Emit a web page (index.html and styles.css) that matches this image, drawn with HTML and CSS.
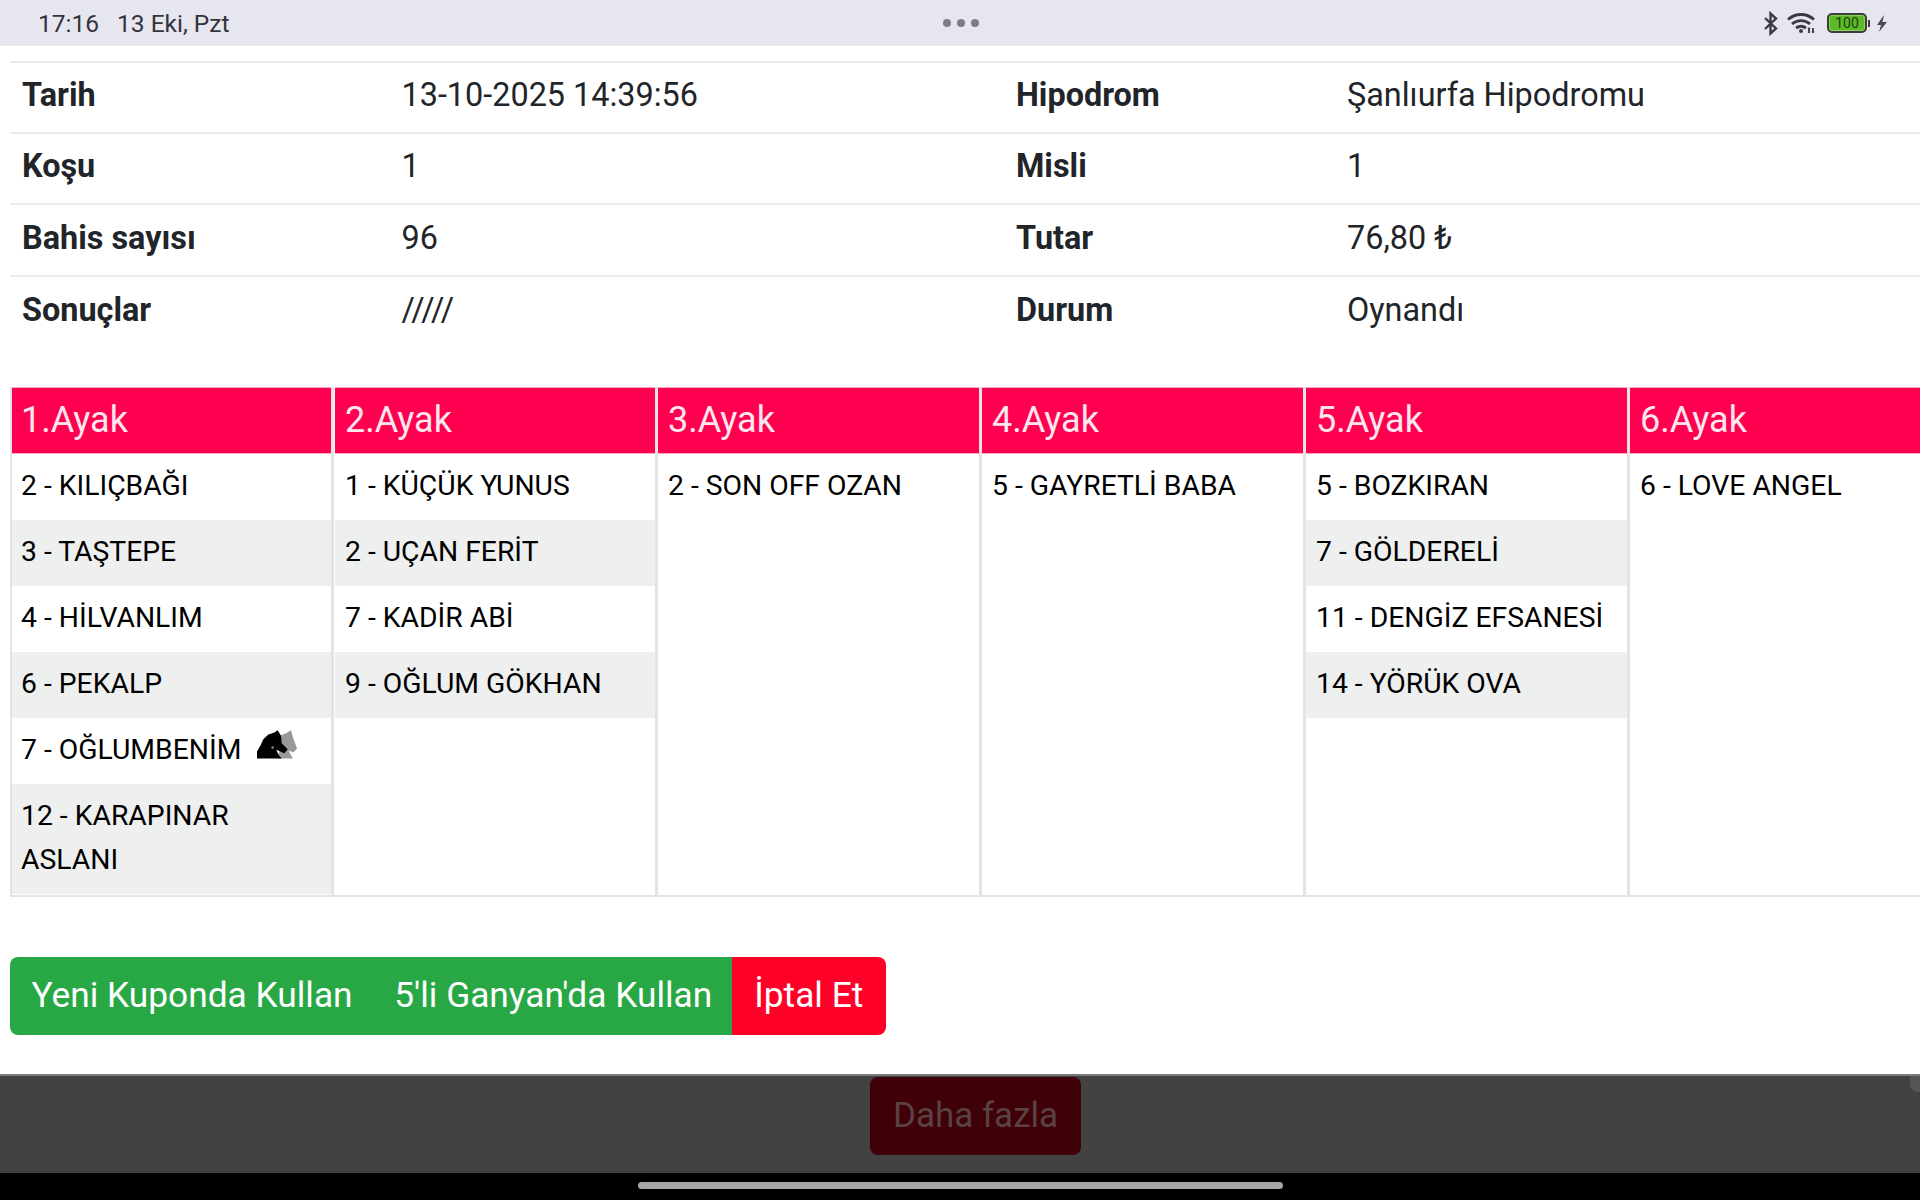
FILE: index.html
```html
<!DOCTYPE html>
<html lang="tr">
<head>
<meta charset="utf-8">
<title>Kupon</title>
<link rel="stylesheet" href="styles.css">
</head>
<body>
<header class="status">
  <div class="status-left"><span>17:16</span><span>13 Eki, Pzt</span></div>
  <div class="dots"><i></i><i></i><i></i></div>
  <div class="status-right">
    <svg class="ic-bt" width="16" height="25" viewBox="0 0 16 24"><path d="M2 6.500 13 17l-5.500 5V2L13 7 2 17.500" fill="none" stroke="#3a3a44" stroke-width="2.400"/></svg>
    <svg class="ic-wifi" width="30" height="22" viewBox="0 0 30 22"><g fill="none" stroke="#3a3a44" stroke-width="2.800"><path d="M1 7.500C8.500 .8 19.500 .8 27 7.500"/><path d="M5 12c5.500-4.500 12.500-4.500 18 0"/><path d="M9 16c3.200-2.300 6.800-2.300 10 0"/></g><circle cx="14" cy="19" r="2" fill="#3a3a44"/><path d="M22 21v-5M26 21v-5" stroke="#3a3a44" stroke-width="1.800"/><path d="m20.500 17 1.500-2 1.500 2M24.500 19l1.500 2 1.500-2" fill="#3a3a44"/></svg>
    <div class="battery"><span class="battery-body"><span class="battery-num">100</span></span><span class="battery-cap"></span></div>
    <svg class="ic-bolt" width="10" height="17" viewBox="0 0 10 17"><path d="M7 0 0 10h4l-2 7 8-10H5.500z" fill="#4a4a52"/></svg>
  </div>
</header>

<main class="page">
  <section class="info">
    <div class="info-row"><b>Tarih</b><span>13-10-2025 14:39:56</span><b>Hipodrom</b><span>Şanlıurfa Hipodromu</span></div>
    <div class="info-row"><b>Koşu</b><span>1</span><b>Misli</b><span>1</span></div>
    <div class="info-row"><b>Bahis sayısı</b><span>96</span><b>Tutar</b><span>76,80 ₺</span></div>
    <div class="info-row"><b>Sonuçlar</b><span>/////</span><b>Durum</b><span>Oynandı</span></div>
  </section>

  <section class="legs">
    <div class="leg">
      <h3>1.Ayak</h3>
      <p>2 - KILIÇBAĞI</p><p>3 - TAŞTEPE</p><p>4 - HİLVANLIM</p><p>6 - PEKALP</p>
      <p>7 - OĞLUMBENİM
        <svg class="horse" width="42" height="31" viewBox="75 30 126 92"><path d="M135 118 148 92 146 50 165 42 180 33 186 55 198 88 187 100 172 94 186 118z" fill="#999"/><path d="M78 118V97L88 80 97 60 112 46 130 40 140 33 150 50 152 72 170 90 160 102 146 96 136 92 142 106 152 118z" fill="#000"/><circle cx="125" cy="85" r="4" fill="#888"/></svg>
      </p>
      <p>12 - KARAPINAR ASLANI</p>
    </div>
    <div class="leg"><h3>2.Ayak</h3><p>1 - KÜÇÜK YUNUS</p><p>2 - UÇAN FERİT</p><p>7 - KADİR ABİ</p><p>9 - OĞLUM GÖKHAN</p></div>
    <div class="leg"><h3>3.Ayak</h3><p>2 - SON OFF OZAN</p></div>
    <div class="leg"><h3>4.Ayak</h3><p>5 - GAYRETLİ BABA</p></div>
    <div class="leg"><h3>5.Ayak</h3><p>5 - BOZKIRAN</p><p>7 - GÖLDERELİ</p><p>11 - DENGİZ EFSANESİ</p><p>14 - YÖRÜK OVA</p></div>
    <div class="leg"><h3>6.Ayak</h3><p>6 - LOVE ANGEL</p></div>
  </section>

  <div class="actions">
    <button class="btn green">Yeni Kuponda Kullan</button><button class="btn green">5'li Ganyan'da Kullan</button><button class="btn red">İptal Et</button>
  </div>
</main>

<div class="dim"><button class="more">Daha fazla</button><span class="edge"></span></div>
<footer class="nav"><span class="pill"></span></footer>
</body>
</html>
```

FILE: styles.css
```css
* { box-sizing: border-box; }
html, body { margin: 0; padding: 0; }
body {
  width: 1920px;
  height: 1200px;
  overflow: hidden;
  display: flex;
  flex-direction: column;
  background: #fff;
  font-family: Roboto, "Liberation Sans", sans-serif;
}

.status {
  height: 46px;
  flex: none;
  background: #e6e6ee;
  color: #33333b;
  font-size: 24.500px;
  display: grid;
  grid-template-columns: 1fr auto 1fr;
  align-items: center;
  padding: 0 33px 0 38px;
}
.status-left { display: flex; gap: 18px; }
.dots { display: flex; gap: 6px; margin-left: -4px; }
.dots i { width: 8px; height: 8px; border-radius: 50%; background: #7c7c84; }
.status-right { display: flex; justify-content: flex-end; align-items: center; }
.ic-bt { margin-right: 8px; }
.ic-wifi { margin-right: 10px; }
.battery { display: flex; align-items: center; margin-right: 7px; }
.battery-body {
  width: 40px;
  height: 20px;
  padding: 1px;
  display: flex;
  border: 2px solid #3d3d3d;
  border-radius: 5px;
  background: #8ad24f;
  color: #1f3a12;
  font-size: 14px;
  line-height: 14px;
  text-align: center;
}
.battery-num { flex: 1; background: #5cba26; border-radius: 2px; }
.battery-cap { width: 2px; height: 7px; margin-left: 1px; background: #3d3d3d; }

.page { flex: 1; min-height: 0; padding: 15px 0 0 10px; }

.info { border-top: 2px solid #e9ecef; }
.info-row {
  height: 71.500px;
  display: grid;
  grid-template-columns: 379.500px 614.500px 331px 1fr;
  align-items: center;
  padding: 0 0 4px 12px;
  color: #212529;
  font-size: 32.400px;
  border-bottom: 2px solid #e9ecef;
}
.info-row:first-child { height: 70.500px; }
.info-row:last-child { border-bottom: 0; padding-bottom: 5px; }
.info-row b { font-weight: 700; }

.legs {
  display: flex;
  width: 1950px;
  margin-top: 39px;
  height: 509.500px;
  border-bottom: 2px solid #e4e4e4;
}
.leg {
  width: 324px;
  flex: none;
  border-right: 3px solid #e4e4e4;
}
.leg:nth-child(2) { padding-left: 1px; }
.leg h3 {
  margin: 0;
  height: 67px;
  padding: 0 10px;
  background: #ff0050;
  border-top: 1px solid #f7a8c4;
  border-bottom: 1px solid #f7a8c4;
  color: #fde6ee;
  font-size: 36px;
  font-weight: 400;
  line-height: 64px;
}
.leg:first-child h3 { padding-left: 9px; }
.leg p {
  margin: 0;
  padding: 10px 10px 12px;
  min-height: 66px;
  font-size: 28.300px;
  line-height: 44px;
  color: #000;
}
.leg p:nth-of-type(even) { background: #eeefef; }
.leg:first-child { border-left: 2px solid #e4e4e4; }
.leg:first-child p { padding-left: 9px; }
.horse { margin-left: 8px; vertical-align: -1px; filter: blur(0.5px); }

.actions { display: flex; margin-top: 60.500px; }
.btn {
  height: 78px;
  border: 0;
  padding: 0 0 2px;
  color: #fff;
  font-family: inherit;
  font-size: 35.300px;
}
.green { background: #28a745; }
.green:first-child { width: 363px; border-radius: 8px 0 0 8px; padding-left: 1px; }
.green:nth-child(2) { width: 358.500px; padding-left: 2px; }
.red { width: 154.500px; background: #ff0028; border-radius: 0 8px 8px 0; }

.dim {
  position: relative;
  height: 99px;
  flex: none;
  background: #424242;
  border-top: 2px solid #7a7a7a;
  display: flex;
  justify-content: center;
  padding: 1px 0 0 31px;
}
.more {
  width: 211px;
  height: 78px;
  border: 0;
  padding: 0 0 2px;
  border-radius: 8px;
  background: #3f0008;
  color: #5a4144;
  font-family: inherit;
  font-size: 35px;
}
.edge {
  position: absolute;
  right: 0;
  top: 0;
  width: 10px;
  height: 16px;
  background: #555;
  border-radius: 0 0 0 8px;
}
.nav {
  flex: none;
  height: 27px;
  background: #000;
  display: flex;
  justify-content: center;
  padding-top: 9px;
}
.pill { width: 645px; height: 7px; border-radius: 4px; background: #a6a6a6; }
```
